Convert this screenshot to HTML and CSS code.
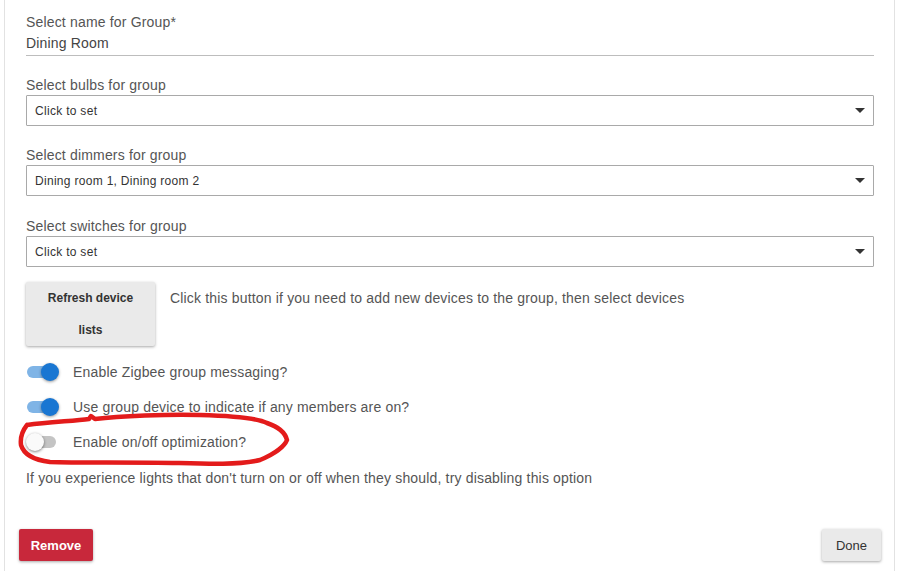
FILE: index.html
```html
<!DOCTYPE html>
<html>
<head>
<meta charset="utf-8">
<link rel="stylesheet" href="styles.css">
</head>
<body>
<div class="dialog">
  <div class="content">
    <div class="field">
      <div class="label">Select name for Group*</div>
      <div class="text-input">Dining Room</div>
    </div>
    <div class="field">
      <div class="label">Select bulbs for group</div>
      <div class="select"><span>Click to set</span><span class="arrow"></span></div>
    </div>
    <div class="field wide">
      <div class="label">Select dimmers for group</div>
      <div class="select"><span>Dining room 1, Dining room 2</span><span class="arrow"></span></div>
    </div>
    <div class="field">
      <div class="label">Select switches for group</div>
      <div class="select"><span>Click to set</span><span class="arrow"></span></div>
    </div>
    <div class="refresh-row">
      <button class="btn-refresh">Refresh device lists</button>
      <div class="hint">Click this button if you need to add new devices to the group, then select devices</div>
    </div>
    <div class="toggles">
      <div class="toggle-row">
        <span class="switch on"><span class="track"></span><span class="thumb"></span></span>
        <span class="toggle-label">Enable Zigbee group messaging?</span>
      </div>
      <div class="toggle-row">
        <span class="switch on"><span class="track"></span><span class="thumb"></span></span>
        <span class="toggle-label">Use group device to indicate if any members are on?</span>
      </div>
      <div class="toggle-row circled">
        <span class="switch"><span class="track"></span><span class="thumb"></span></span>
        <span class="toggle-label">Enable on/off optimization?</span>
        <svg class="scribble" width="280" height="60" viewBox="0 0 280 60">
          <path d="M8 12 C 30 9, 55 8, 70 6 L 72 3 L 76 6 C 100 3, 150 1, 181 2 C 220 3, 240 6, 248 10 C 260 14, 266 19, 268 27 C 266 32, 258 40, 241 47 C 220 52, 190 51, 160 50 C 110 49, 60 50, 31 49 C 15 47, 5 42, 2 32 C 1 24, 4 17, 8 12"
            fill="none" stroke="#e31b1b" stroke-width="4.5" stroke-linecap="round" stroke-linejoin="round"/>
        </svg>
      </div>
    </div>
    <div class="help">If you experience lights that don't turn on or off when they should, try disabling this option</div>
  </div>
  <div class="actions">
    <button class="btn btn-remove">Remove</button>
    <button class="btn btn-done">Done</button>
  </div>
</div>
</body>
</html>
```

FILE: styles.css
```css
html, body {
  margin: 0;
  padding: 0;
  background: #fff;
}
body {
  font-family: "Liberation Sans", Arial, sans-serif;
  font-size: 14px;
  letter-spacing: 0.17px;
  color: #555;
}
.dialog {
  margin-left: 4px;
  width: 891px;
  height: 571px;
  box-sizing: border-box;
  border-left: 1px solid #e2e2e2;
  border-right: 1px solid #e2e2e2;
  display: flex;
  flex-direction: column;
}
.content {
  padding: 14px 20px 0 21px;
  display: flex;
  flex-direction: column;
}
.field {
  margin-bottom: 21px;
}
.field.wide {
  margin-bottom: 22px;
}
.label {
  line-height: 16px;
  color: #555;
}
.text-input {
  padding: 5px 0 4px;
  line-height: 16px;
  color: #444;
  border-bottom: 1px solid #bdbdbd;
}
.select {
  margin-top: 2px;
  height: 29px;
  border: 1px solid #a9a9a9;
  border-radius: 1px;
  display: flex;
  align-items: center;
  justify-content: space-between;
  padding: 0 8px 0 8px;
  font-size: 12px;
  letter-spacing: 0.3px;
  color: #333;
}
.arrow {
  width: 0;
  height: 0;
  border-left: 5px solid transparent;
  border-right: 5px solid transparent;
  border-top: 5px solid #333;
}
.refresh-row {
  display: flex;
  align-items: flex-start;
  margin-top: -6px;
}
.btn-refresh {
  width: 129px;
  height: 64px;
  border: none;
  border-radius: 2px;
  background: #eaeaea;
  box-shadow: 0 1px 3px rgba(0,0,0,0.35);
  font-family: "Liberation Sans", Arial, sans-serif;
  font-weight: bold;
  font-size: 12px;
  letter-spacing: normal;
  line-height: 32px;
  color: #333;
  padding: 0 14px;
  text-align: center;
}
.hint {
  margin-left: 15px;
  margin-top: 8px;
  line-height: 16px;
}
.toggles {
  margin-top: 14px;
  display: flex;
  flex-direction: column;
  gap: 11px;
}
.toggle-row {
  display: flex;
  align-items: center;
  height: 24px;
  position: relative;
}
.switch {
  position: relative;
  width: 34px;
  height: 24px;
  flex: none;
}
.track {
  position: absolute;
  left: 1px;
  top: 6px;
  width: 29px;
  height: 12px;
  border-radius: 6px;
  background: #c4c4c4;
}
.thumb {
  position: absolute;
  left: 0;
  top: 3px;
  width: 18px;
  height: 18px;
  border-radius: 50%;
  background: #fafafa;
  box-shadow: 0 1px 3px rgba(0,0,0,0.5);
}
.switch.on .track {
  background: #7fb4e6;
}
.switch.on .thumb {
  left: 15px;
  background: #1976d2;
  box-shadow: 0 1px 3px rgba(0,0,0,0.4);
}
.toggle-label {
  margin-left: 13px;
  line-height: 16px;
}
.scribble {
  position: absolute;
  left: -7px;
  top: -17px;
  overflow: visible;
  pointer-events: none;
}
.help {
  margin-top: 16px;
  line-height: 16px;
}
.actions {
  margin-top: auto;
  display: flex;
  justify-content: space-between;
  padding: 0 13px 10px 14px;
}
.btn {
  height: 32px;
  border: none;
  border-radius: 2px;
  font-family: "Liberation Sans", Arial, sans-serif;
  font-size: 13px;
  letter-spacing: normal;
  box-shadow: 0 1px 3px rgba(0,0,0,0.35);
}
.btn-remove {
  width: 74px;
  background: #c8283b;
  color: #fff;
  font-weight: bold;
}
.btn-done {
  width: 59px;
  background: #eaeaea;
  color: #333;
}
```
